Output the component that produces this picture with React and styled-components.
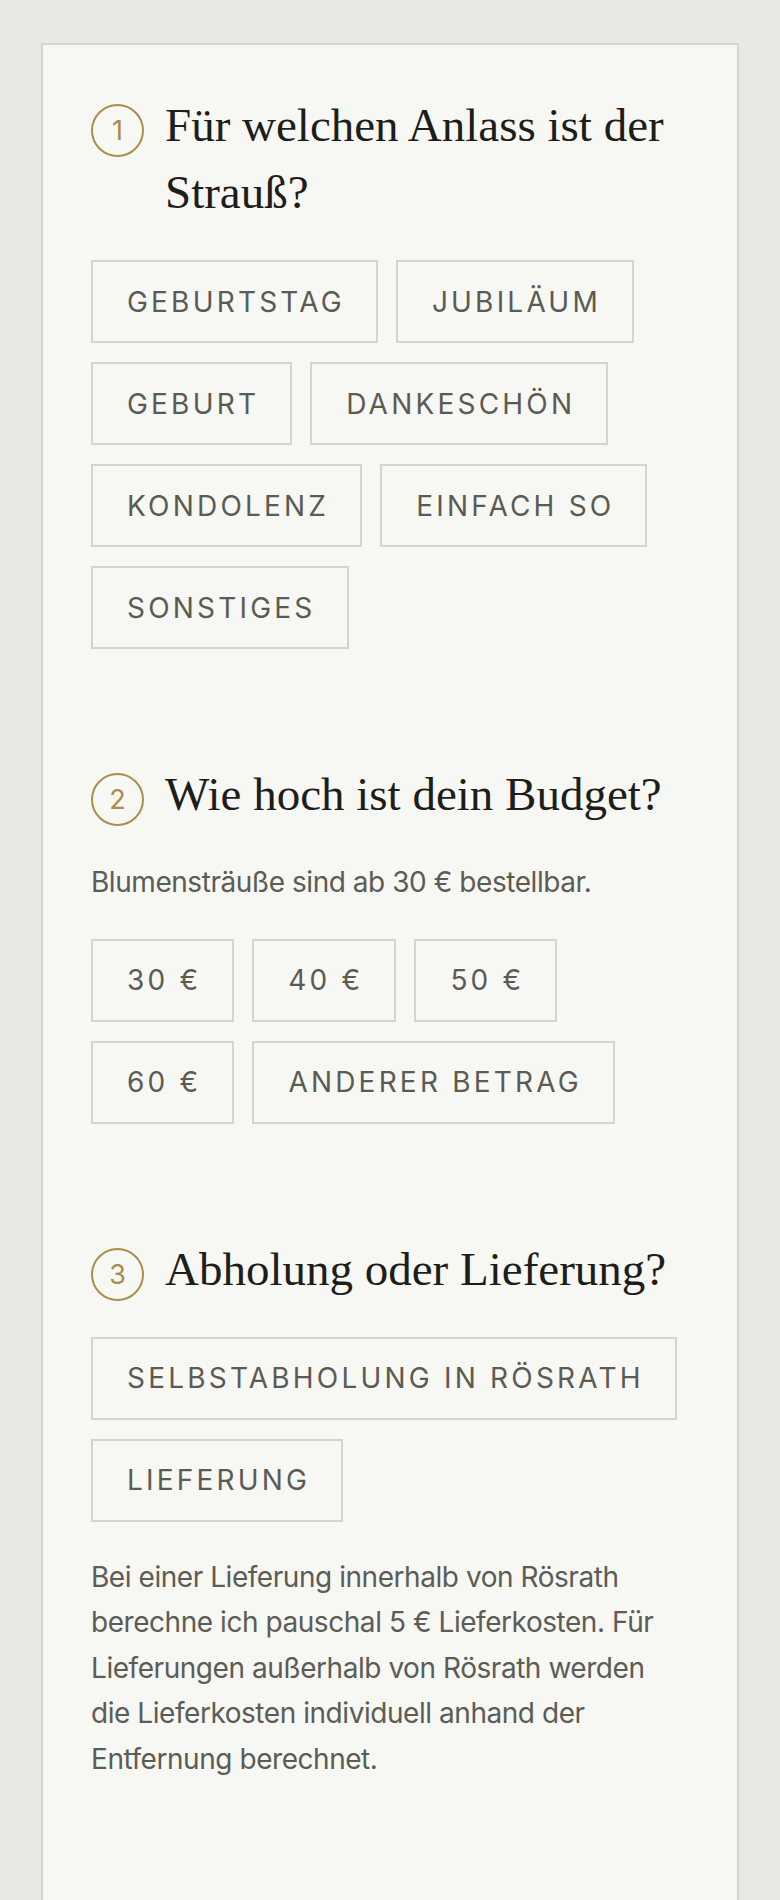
import React from "react";
import styled, { createGlobalStyle } from "styled-components";

const GlobalStyle = createGlobalStyle`
  *, *::before, *::after { box-sizing: border-box; }
  body {
    margin: 0;
    background: #e9e8e4;
    font-family: Inter, "Liberation Sans", sans-serif;
    -webkit-font-smoothing: antialiased;
  }
`;

const Page = styled.div`
  min-height: 1900px;
  padding: 43px 41px 0;
  display: flex;
  flex-direction: column;
`;

const Card = styled.form`
  flex: 1;
  background: #f7f7f3;
  border: 2px solid #d5d5cd;
  border-bottom: none;
  padding: 47px 48px 120px;
  display: flex;
  flex-direction: column;
  gap: 112px;
`;

const Section = styled.section`
  display: flex;
  flex-direction: column;
  gap: 33px;
`;

const QuestionHeader = styled.div`
  display: flex;
  align-items: flex-start;
  gap: 21px;
  margin-bottom: 1px;
`;

const StepBadge = styled.span`
  flex: 0 0 53px;
  width: 53px;
  height: 53px;
  margin-top: 12px;
  border: 2px solid #ab8e4a;
  border-radius: 50%;
  display: flex;
  align-items: center;
  justify-content: center;
  color: #a88c4b;
  font-family: Inter, "Liberation Sans", sans-serif;
  font-size: 27px;
  font-weight: 400;
  line-height: 1;
`;

const Title = styled.h2`
  margin: 0;
  font-family: "Liberation Serif", "DejaVu Serif", serif;
  font-weight: 400;
  font-size: 47px;
  line-height: 67px;
  color: #1d1d1a;
`;

const Hint = styled.p`
  margin: 0;
  font-size: 28px;
  line-height: 45.5px;
  color: #5c5c56;
  letter-spacing: -0.45px;
`;

const BudgetHint = styled(Hint)`
  margin-top: -2px;
`;

const Options = styled.div`
  display: flex;
  flex-wrap: wrap;
  column-gap: 18px;
  row-gap: 19px;
`;

const Option = styled.button`
  height: 83px;
  padding: 0 31px 0 34px;
  display: inline-flex;
  align-items: center;
  background: transparent;
  border: 2px solid #d5d5cd;
  border-radius: 0;
  color: #5b5b55;
  font-family: Inter, "Liberation Sans", sans-serif;
  font-size: 28px;
  font-weight: 400;
  letter-spacing: 3.2px;
  text-transform: uppercase;
  cursor: pointer;
`;

const Note = styled(Hint)``;

const questions = [
  {
    step: 1,
    title: "Für welchen Anlass ist der Strauß?",
    options: [
      "Geburtstag",
      "Jubiläum",
      "Geburt",
      "Dankeschön",
      "Kondolenz",
      "Einfach so",
      "Sonstiges",
    ],
  },
  {
    step: 2,
    title: "Wie hoch ist dein Budget?",
    hint: "Blumensträuße sind ab 30 € bestellbar.",
    options: ["30 €", "40 €", "50 €", "60 €", "Anderer Betrag"],
  },
  {
    step: 3,
    title: "Abholung oder Lieferung?",
    options: ["Selbstabholung in Rösrath", "Lieferung"],
    note:
      "Bei einer Lieferung innerhalb von Rösrath berechne ich pauschal 5 € Lieferkosten. Für Lieferungen außerhalb von Rösrath werden die Lieferkosten individuell anhand der Entfernung berechnet.",
  },
];

export default function App() {
  return (
    <>
      <GlobalStyle />
      <Page>
        <Card onSubmit={(e) => e.preventDefault()}>
          {questions.map((q) => (
            <Section key={q.step}>
              <QuestionHeader>
                <StepBadge>{q.step}</StepBadge>
                <Title>{q.title}</Title>
              </QuestionHeader>
              {q.hint && <BudgetHint>{q.hint}</BudgetHint>}
              <Options>
                {q.options.map((label) => (
                  <Option type="button" key={label}>
                    {label}
                  </Option>
                ))}
              </Options>
              {q.note && <Note>{q.note}</Note>}
            </Section>
          ))}
        </Card>
      </Page>
    </>
  );
}
